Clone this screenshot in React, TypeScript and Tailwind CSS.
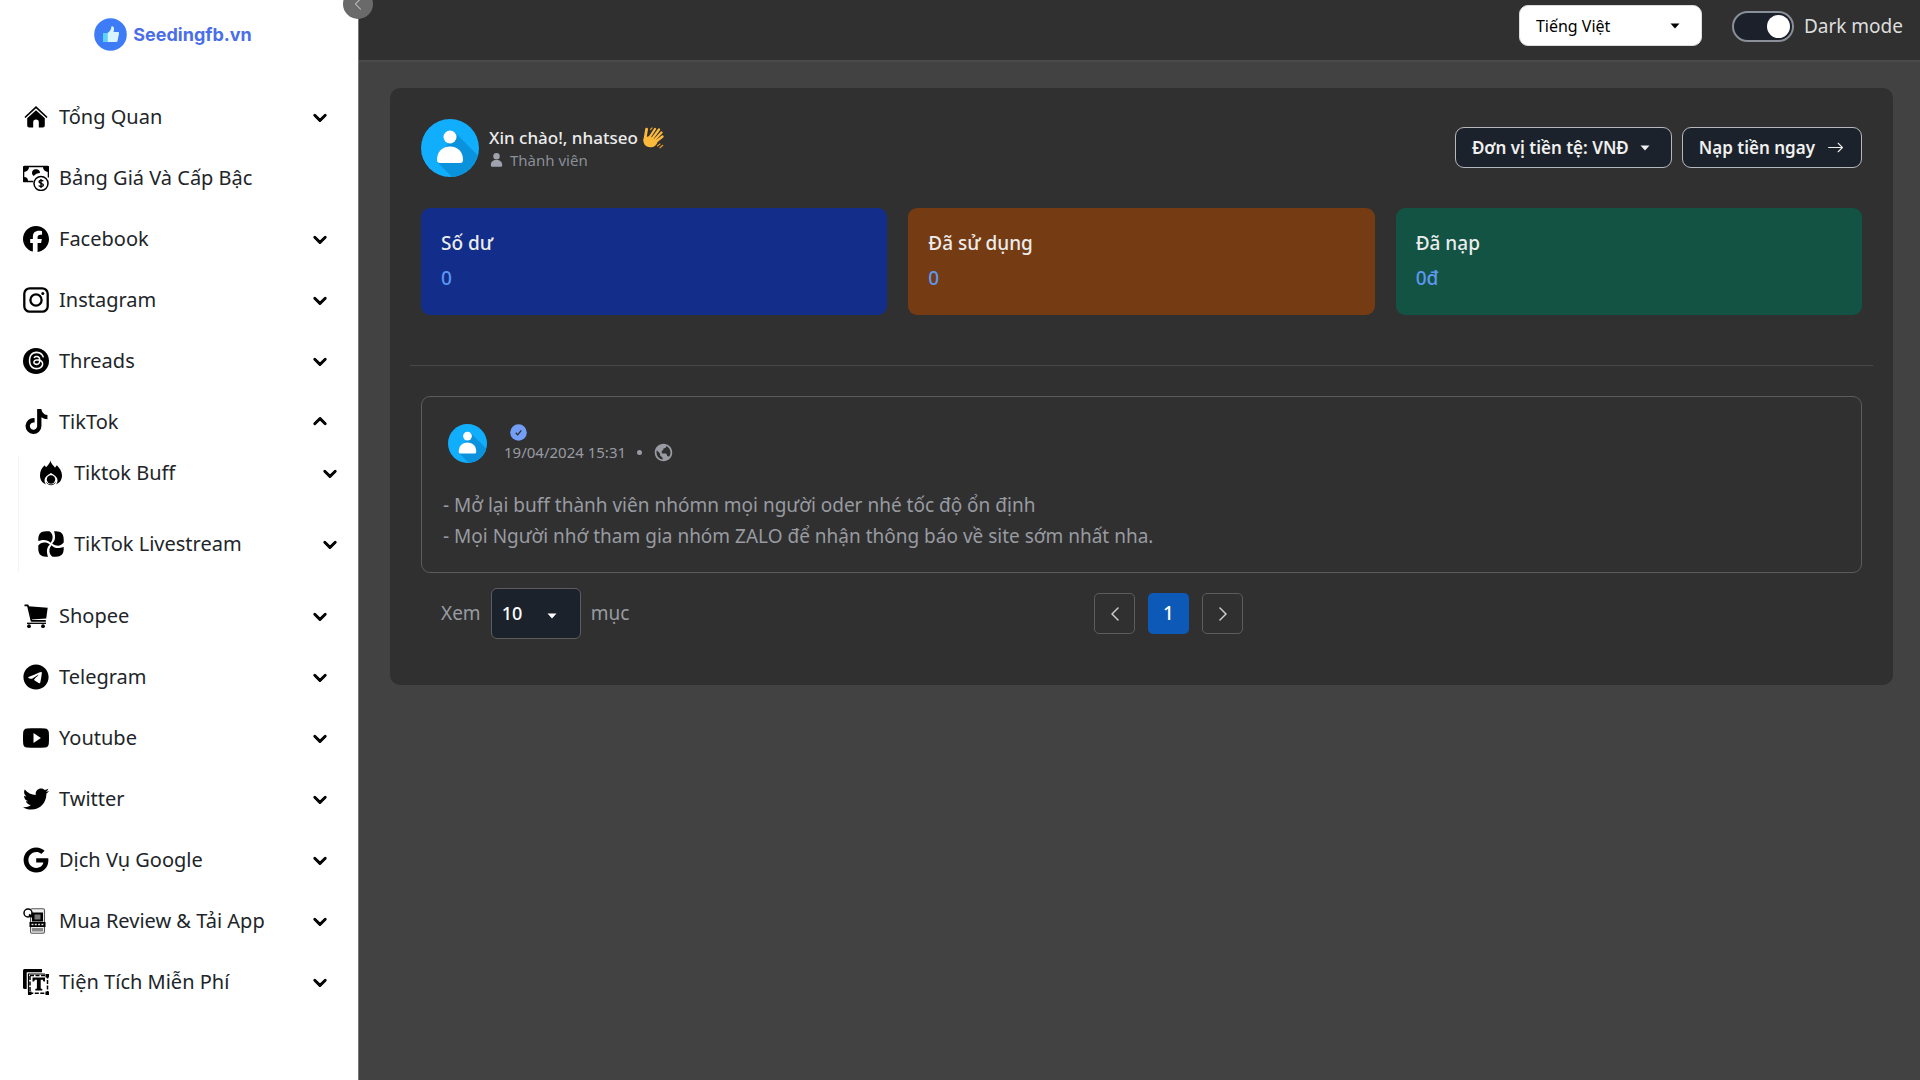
import type { ReactNode } from 'react'
import {
  FaChevronDown,
  FaFacebook,
  FaGoogle,
  FaTelegram,
  FaThreads,
  FaTiktok,
  FaTwitter,
} from 'react-icons/fa6'
import { IoLogoYoutube } from 'react-icons/io5'
import { BsArrowRight, BsChevronLeft, BsChevronRight } from 'react-icons/bs'
import { BiWorld } from 'react-icons/bi'

interface MenuItem {
  label: string
  icon: ReactNode
  expandable?: boolean
  children?: MenuItem[]
}

const iconProps = { width: 26, height: 26, viewBox: '0 0 26 26', 'aria-hidden': true }

function HomeIcon() {
  return (
    <svg {...iconProps}>
      <path d="M2.5 13 13 3.2 23.5 13" fill="none" stroke="#000" strokeWidth="1.7" strokeLinecap="round" />
      <path d="M13 6.2 4.2 14.2V21.5a2 2 0 0 0 2 2h4v-5.300a2.800 2.800 0 0 1 5.600 0v5.300h4a2 2 0 0 0 2-2v-7.300z" />
    </svg>
  )
}

function PriceIcon() {
  return (
    <svg {...iconProps}>
      <path d="M10 16.500H1.500a1 1 0 0 1-1-1v-13a1 1 0 0 1 1-1h23a1 1 0 0 1 1 1v10" fill="none" stroke="#000" strokeWidth="1.600" />
      <path d="M1 2h5a5 5 0 0 1-5 5zM25 2h-5a5 5 0 0 0 5 5zM1 16h4a4 4 0 0 0-4-4z" />
      <path d="M9 8.500a4 4 0 0 1 8-.5c-2.500 0-4.800 1-6.200 3A4 4 0 0 1 9 8.500z" />
      <circle cx="18" cy="18.500" r="7" fill="#fff" stroke="#000" strokeWidth="1.500" />
      <path d="M20.300 16.200c-.5-1-4.300-1.500-4.300.6 0 2 4.400 1.200 4.400 3.200s-4 1.800-4.700.5M18 14v9" fill="none" stroke="#000" strokeWidth="1.400" />
    </svg>
  )
}

function InstagramIcon() {
  return (
    <svg {...iconProps} fill="none" stroke="#000" strokeWidth="2.300">
      <rect x="1.300" y="1.300" width="23.400" height="23.400" rx="5.500" />
      <circle cx="13" cy="13" r="5.600" />
      <circle cx="19.800" cy="6.500" r="1.500" fill="#000" stroke="none" />
    </svg>
  )
}

function ThreadsIcon() {
  return (
    <span className="flex size-[26px] items-center justify-center rounded-full bg-black">
      <FaThreads size={19} color="#fff" />
    </span>
  )
}

function FlameIcon() {
  return (
    <svg {...iconProps}>
      <path d="M12.500.5c.5 3.500 3 4.500 4.500 7.200l1.800-2.400C21.500 8 24 11.500 24 15.500c0 4.500-2.500 7.500-6 9 1-1.200 1.500-2.700 1.500-4.200 0-2.800-2.300-4.800-6.500-7.300-4.200 2.500-6.500 4.500-6.500 7.300 0 1.500.5 3 1.500 4.200-3.500-1.500-6-4.500-6-9 0-4 1.500-7.500 4.700-10.200l1.300 2C9.500 5.500 12 3.500 12.500.5z" />
      <circle cx="13" cy="19.500" r="4.200" />
      <path d="M8.500 22.500a5.500 5.500 0 0 0 9 0" fill="none" stroke="#000" strokeWidth=".8" />
    </svg>
  )
}

function PinwheelIcon() {
  return (
    <svg {...iconProps}>
      {[0, 90, 180, 270].map((angle) => (
        <path
          key={angle}
          transform={`rotate(${angle} 13 13)`}
          d="M.3 10V8C.3 3 3 .3 8 .3h3.500c2.500 1.700 3.500 4.500 3 7.200-.3 1.800-1 3.200-2 4.300C10.500 9.500 7.500 8.600 4.500 9 3 9.200 1.500 9.500.3 10z"
        />
      ))}
    </svg>
  )
}

function CartIcon() {
  return (
    <svg {...iconProps}>
      <path d="M1.500 2.300h3.300l3.700 15.500h14.300" fill="none" stroke="#000" strokeWidth="1.700" strokeLinejoin="round" />
      <path d="M5.500 3.200l19.200 1.500-1.500 10.800L8.500 16.500z" />
      <path d="M4 20.300h19" stroke="#000" strokeWidth="1.300" />
      <circle cx="6" cy="23.200" r="1.900" />
      <circle cx="20" cy="23.200" r="1.900" />
    </svg>
  )
}

function AppReviewIcon() {
  return (
    <svg {...iconProps}>
      <rect x="7.500" y=".8" width="14" height="24.500" rx="1.500" fill="#eee" stroke="#555" strokeWidth="1.100" />
      <path d="M9 4.500h11v9H9z" />
      <path d="M11.500 6.500h6v5h-6z" fill="#777" />
      <path d="M6.500 14h16v5h-16z" />
      <path d="M8.500 16.500h12" stroke="#ddd" strokeWidth="1.500" strokeDasharray="2 1.300" />
      <path d="M9 20h11v3.500H9z" fill="#888" />
      <circle cx="5" cy="5" r="4" fill="#fff" stroke="#000" strokeWidth="1.500" />
      <path d="M6 6.500 9 9" stroke="#000" strokeWidth="2" />
    </svg>
  )
}

function TextToolIcon() {
  return (
    <svg {...iconProps}>
      <path d="M0 1.500A1.500 1.500 0 0 1 1.500 0H19v3.300H3.700V20H1.500A1.500 1.500 0 0 1 0 18.500z" />
      <path d="M5.500 24V5H22" fill="none" stroke="#000" strokeWidth="1.200" />
      <rect x="7" y="6.500" width="17.500" height="17.800" fill="none" stroke="#000" strokeWidth="1.500" strokeDasharray="4 1.500" />
      <path d="M9.500 8.500h12.500v4h-1.500l-.8-1.700h-2v8.700l1.600.6v1.300h-7v-1.300l1.600-.6v-8.700h-2l-.8 1.700H9.500z" />
      <path d="M5 22.500h3.500V26H5zM22.500 22.500H26V26h-3.500zM22.500 5H26v3.500h-3.500z" />
    </svg>
  )
}

const menu: MenuItem[] = [
  { label: 'Tổng Quan', icon: <HomeIcon />, expandable: true },
  { label: 'Bảng Giá Và Cấp Bậc', icon: <PriceIcon /> },
  { label: 'Facebook', icon: <FaFacebook size={26} />, expandable: true },
  { label: 'Instagram', icon: <InstagramIcon />, expandable: true },
  { label: 'Threads', icon: <ThreadsIcon />, expandable: true },
  {
    label: 'TikTok',
    icon: <FaTiktok size={25} />,
    expandable: true,
    children: [
      { label: 'Tiktok Buff', icon: <FlameIcon />, expandable: true },
      { label: 'TikTok Livestream', icon: <PinwheelIcon />, expandable: true },
    ],
  },
  { label: 'Shopee', icon: <CartIcon />, expandable: true },
  { label: 'Telegram', icon: <FaTelegram size={26} />, expandable: true },
  { label: 'Youtube', icon: <IoLogoYoutube size={26} />, expandable: true },
  { label: 'Twitter', icon: <FaTwitter size={26} />, expandable: true },
  { label: 'Dịch Vụ Google', icon: <FaGoogle size={26} />, expandable: true },
  { label: 'Mua Review & Tải App', icon: <AppReviewIcon />, expandable: true },
  { label: 'Tiện Tích Miễn Phí', icon: <TextToolIcon />, expandable: true },
]

function MenuRow({ item }: { item: MenuItem }) {
  return (
    <a href="#" className="flex h-[35px] items-center gap-[10px] text-[20px]">
      <span className="flex size-[26px] shrink-0 items-center justify-center text-black">{item.icon}</span>
      <span className="grow whitespace-nowrap">{item.label}</span>
      {item.expandable && (
        <FaChevronDown
          size={14}
          strokeWidth={40}
          className={item.children ? 'rotate-180 overflow-visible text-black' : 'overflow-visible text-black'}
        />
      )}
    </a>
  )
}

function Sidebar() {
  return (
    <aside className="relative w-[359px] shrink-0 border-r border-[#777] bg-white text-[#212529]">
      <a href="#" className="flex h-[68px] items-center justify-center gap-[6px] pr-[12px] text-[#4a6ee8]">
        <svg width="33" height="33" viewBox="0 0 33 33" aria-hidden>
          <circle cx="16.500" cy="16.500" r="16.300" fill="#3d7bf7" />
          <path d="M9 15h4.500v9H9z" fill="#55d6f8" />
          <path d="M13.500 15c2.500-1.500 3.700-3.700 4-6.700 2.500-.2 3.200 2 2 5.700h4.500c1 0 1.300.8 1 1.700L23.500 23c-.3.800-.7 1-1.500 1h-8.500z" fill="#d8f4ff" />
        </svg>
        <span className="font-['Inter',sans-serif] text-[18px] font-bold">Seedingfb.vn</span>
      </a>
      <nav className="flex flex-col gap-[26px] pt-[31px] pr-[31px] pl-[23px]">
        {menu.map((item) => (
          <div key={item.label}>
            <MenuRow item={item} />
            {item.children && (
              <div className="mt-[16px] mr-[-10px] ml-[-5px] flex flex-col gap-[36px] border-l border-gray-100 pb-[11px] pl-[19px]">
                {item.children.map((child) => (
                  <MenuRow key={child.label} item={child} />
                ))}
              </div>
            )}
          </div>
        ))}
      </nav>
      <button
        aria-label="Thu gọn menu"
        className="absolute top-[-11px] right-[-15px] z-10 flex size-[30px] items-center justify-center rounded-full bg-[#6a6a6a] text-[#ccc]"
      >
        <BsChevronLeft size={14} />
      </button>
    </aside>
  )
}

function Caret() {
  return (
    <svg width="10" height="6" viewBox="0 0 10 6" fill="currentColor" className="pointer-events-none" aria-hidden>
      <path d="M.5.500h9L5 5.500z" />
    </svg>
  )
}

function Header() {
  return (
    <header className="flex h-[62px] items-start justify-end gap-[30px] border-b-2 border-[#4a4a4a] bg-[#303030] pt-[5px] pr-[17px]">
      <div className="relative text-black">
        <select
          aria-label="Ngôn ngữ"
          className="h-[41px] w-[183px] appearance-none rounded-[9px] border border-[#ddd] bg-white pl-[16px] text-base"
        >
          <option>Tiếng Việt</option>
        </select>
        <span className="pointer-events-none absolute top-[18px] right-[22px]">
          <Caret />
        </span>
      </div>
      <label className="flex h-[42px] items-center gap-[10px] text-[19px] text-[#dedede]">
        <input type="checkbox" role="switch" defaultChecked className="peer sr-only" />
        <span className="flex h-[31px] w-[62px] items-center justify-end rounded-full border-2 border-[#8a8f98] bg-[#1b202b] pr-[2px]">
          <span className="size-[23px] rounded-full bg-white" />
        </span>
        Dark mode
      </label>
    </header>
  )
}

function Avatar({ className }: { className: string }) {
  return (
    <svg viewBox="0 0 58 58" className={className} aria-hidden>
      <defs>
        <clipPath id="avatar-clip">
          <circle cx="29" cy="29" r="29" />
        </clipPath>
      </defs>
      <g clipPath="url(#avatar-clip)">
        <path d="M0 0h58v58H0z" fill="#12aefe" />
        <path d="M33.500 13 60 39.500V60H33L16.500 43.500z" fill="#0a93dc" />
        <circle cx="29" cy="18" r="6.500" fill="#fff" />
        <path d="M16 41c0-8 5-13.500 13-13.500S42 33 42 41c0 2-1 3-3 3H19c-2 0-3-1-3-3z" fill="#fff" />
      </g>
    </svg>
  )
}

function WaveIcon() {
  return (
    <svg width="22" height="22" viewBox="0 0 22 22" stroke="#fcb93c" strokeLinecap="round" aria-hidden>
      <path d="M3.500 9c1.500 1 2.500 1 4-.500l8 7c-1.500 3.500-4 5-7 4.700C3 19.800 1 16.500 1.500 12.500z" fill="#fcb93c" stroke="none" />
      <path d="M2.800 13 4.600 2.200" strokeWidth="2.800" />
      <path d="M7.500 10.500 13 2M10 12l7-9.500M12 13.500l7.500-8M13 15.500l7.500-6" strokeWidth="2.300" />
      <path d="M8.500 2.500 10 1M15.500 19l2.500-2M18 20.800l2.800-2.500" strokeWidth="1.200" stroke="#e09a2b" />
    </svg>
  )
}

const stats = [
  { label: 'Số dư', value: '0', color: 'bg-[#122e8a]' },
  { label: 'Đã sử dụng', value: '0', color: 'bg-[#753b13]' },
  { label: 'Đã nạp', value: '0đ', color: 'bg-[#135344]' },
]

function Profile() {
  return (
    <div className="flex items-start justify-between">
      <div className="flex items-center gap-[10px]">
        <Avatar className="size-[58px]" />
        <div>
          <div className="flex h-[24px] items-center gap-[4px] text-[17px] font-medium text-[#ececec]">
            Xin chào!, nhatseo <WaveIcon />
          </div>
          <div className="flex h-[21px] items-center gap-[7px] text-[15px] text-[#8b8f98]">
            <svg width="13" height="14" viewBox="0 0 13 14" fill="#a0a3ae" className="ml-[1px]" aria-hidden>
              <circle cx="6.500" cy="3.200" r="3.200" />
              <path d="M.8 12c0-3 2-5 5.700-5s5.700 2 5.700 5c0 1.300-.7 1.800-1.700 1.800h-8C1.500 13.800.8 13.300.8 12z" />
            </svg>
            Thành viên
          </div>
        </div>
      </div>
      <div className="flex gap-[10px] pt-[8px] text-[17px] font-semibold text-[#f0f0f0]">
        <button className="flex h-[41px] items-center gap-[11px] rounded-[9px] border border-[#b5b8bd] bg-[#1c222b] pr-[21px] pl-[16px]">
          Đơn vị tiền tệ: VNĐ <Caret />
        </button>
        <button className="flex h-[41px] items-center gap-[12px] rounded-[9px] border border-[#b5b8bd] bg-[#1c222b] pr-[17px] pl-[16px]">
          Nạp tiền ngay <BsArrowRight size={17} />
        </button>
      </div>
    </div>
  )
}

function Post() {
  return (
    <article className="mt-[30px] rounded-[9px] border border-[#5c5c5c] px-[21px] pt-[27px] pb-[20px] text-[#989ba1]">
      <div className="flex gap-[17px] pl-[5px]">
        <Avatar className="size-[39px]" />
        <div>
          <svg width="17" height="17" viewBox="0 0 17 17" className="ml-[6px]" aria-hidden>
            <circle cx="8.500" cy="8.500" r="8.300" fill="#739ef5" />
            <path d="m5.700 8.800 2 2 3.600-4.500" fill="none" stroke="#303030" strokeWidth="1.300" />
          </svg>
          <div className="flex h-[23px] items-center gap-[11px] text-[15px]">
            19/04/2024 15:31
            <span className="size-[5px] rounded-full bg-[#989ba1]" />
            <BiWorld size={21} />
          </div>
        </div>
      </div>
      <p className="mt-[26px] text-[19px] leading-[31px]">
        - Mở lại buff thành viên nhómn mọi người oder nhé tốc độ ổn định
        <br />- Mọi Người nhớ tham gia nhóm ZALO để nhận thông báo về site sớm nhất nha.
      </p>
    </article>
  )
}

function Pager() {
  return (
    <div className="mt-[15px] grid grid-cols-[653px_1fr] items-center pl-[20px] text-[19px] text-[#989ba1]">
      <label className="flex items-center gap-[10px]">
        Xem
        <span className="relative text-white">
          <select className="h-[51px] w-[90px] appearance-none rounded-[6px] border border-[#5c5c5c] bg-[#1c222b] pl-[10px] text-[18px] font-medium">
            <option>10</option>
          </select>
          <span className="pointer-events-none absolute top-[25px] right-[24px]">
            <Caret />
          </span>
        </span>
        mục
      </label>
      <nav aria-label="Phân trang" className="flex gap-[13px]">
        <button aria-label="Trang trước" className="flex size-[41px] items-center justify-center rounded-[5px] border border-[#5c5c5c] text-[#ddd]">
          <BsChevronLeft size={16} strokeWidth={0.5} />
        </button>
        <button className="size-[41px] rounded-[5px] bg-[#0c59b8] font-medium text-white">1</button>
        <button aria-label="Trang sau" className="flex size-[41px] items-center justify-center rounded-[5px] border border-[#5c5c5c] text-[#ddd]">
          <BsChevronRight size={16} strokeWidth={0.5} />
        </button>
      </nav>
    </div>
  )
}

export default function App() {
  return (
    <div className="flex min-h-screen overflow-hidden bg-[#424242] font-['Noto_Sans',sans-serif]">
      <Sidebar />
      <div className="min-w-0 grow">
        <Header />
        <main className="mt-[26px] mr-[27px] ml-[31px] rounded-[10px] bg-[#303030] px-[31px] pt-[31px] pb-[46px]">
          <Profile />
          <div className="mt-[31px] grid grid-cols-3 gap-[21px]">
            {stats.map((stat) => (
              <div key={stat.label} className={`h-[107px] rounded-[9px] px-[20px] pt-[17px] text-[19px] font-medium ${stat.color}`}>
                <div className="leading-[36px] text-[#ececec]">{stat.label}</div>
                <div className="leading-[34px] text-[#5e97f2]">{stat.value}</div>
              </div>
            ))}
          </div>
          <hr className="mx-[-11px] mt-[50px] border-[#484848]" />
          <Post />
          <Pager />
        </main>
      </div>
    </div>
  )
}
